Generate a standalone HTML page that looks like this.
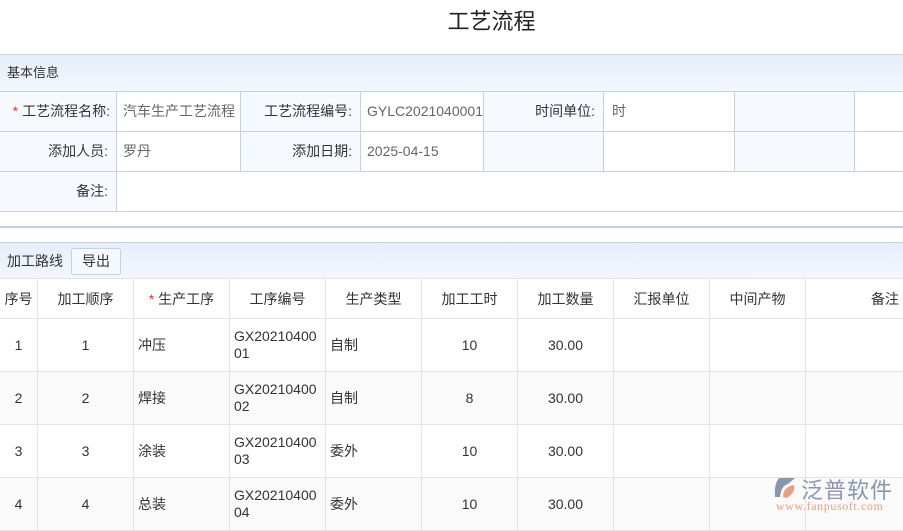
<!DOCTYPE html>
<html><head><meta charset="utf-8"><style>
*{margin:0;padding:0;box-sizing:border-box}
body{width:903px;height:521px;overflow:hidden;background:#fff;font-family:"Liberation Sans","Noto Sans CJK SC",sans-serif;font-size:14px;color:#333;position:relative}
.abs{position:absolute}
.title{left:0;width:983px;top:4px;text-align:center;font-size:22px;color:#222}
.hd{left:0;width:903px;background:linear-gradient(#e6eefa,#f3f7fd);border-top:1px solid #c5d0e0;border-bottom:1px solid #c5d0e0;font-size:13px}
.l{border-right:1px solid #c5d0e0;border-bottom:1px solid #c5d0e0;height:40px;line-height:39px;padding:0 8px;white-space:nowrap;overflow:hidden}
table{border-collapse:collapse;position:absolute;left:-1px;top:278px;table-layout:fixed;width:916px}
td{border:1px solid #e3e3e3;height:53px;text-align:center;padding:0 4px;white-space:nowrap}
tr.h td{height:40px}
tr.g td{background:#fafafa}
.red{color:#e33}
</style></head><body>
<div class="abs title">工艺流程</div>
<div class="abs hd" style="top:54px;height:38px;line-height:36px;padding-left:7px">基本信息</div>
<div class="abs" style="top:92px;left:0">
<div class="abs l" style="left:0;width:117px;text-align:right;background:#f6faff;top:0;padding:0 6px"><span class="red">*</span> 工艺流程名称:</div>
<div class="abs l" style="left:117px;width:124px;color:#666;padding-left:6px">汽车生产工艺流程</div>
<div class="abs l" style="left:241px;width:120px;text-align:right;background:#f6faff">工艺流程编号:</div>
<div class="abs l" style="left:361px;width:123px;color:#666;padding-left:6px">GYLC2021040001</div>
<div class="abs l" style="left:484px;width:120px;text-align:right;background:#f6faff">时间单位:</div>
<div class="abs l" style="left:604px;width:131px;color:#666">时</div>
<div class="abs l" style="left:735px;width:120px;background:#f6faff"></div>
<div class="abs l" style="left:855px;width:60px"></div>
<div class="abs l" style="top:40px;left:0;width:117px;text-align:right;background:#f6faff">添加人员:</div>
<div class="abs l" style="top:40px;left:117px;width:124px;color:#666;padding-left:6px">罗丹</div>
<div class="abs l" style="top:40px;left:241px;width:120px;text-align:right;background:#f6faff">添加日期:</div>
<div class="abs l" style="top:40px;left:361px;width:123px;color:#666;padding-left:6px">2025-04-15</div>
<div class="abs l" style="top:40px;left:484px;width:120px;background:#f6faff"></div>
<div class="abs l" style="top:40px;left:604px;width:131px"></div>
<div class="abs l" style="top:40px;left:735px;width:120px;background:#f6faff"></div>
<div class="abs l" style="top:40px;left:855px;width:60px"></div>
<div class="abs l" style="top:80px;left:0;width:117px;text-align:right;background:#f6faff">备注:</div>
<div class="abs l" style="top:80px;left:117px;width:800px;border-right:0"></div>
</div>
<div class="abs" style="top:226px;left:0;width:903px;height:2px;background:#c5d0e0"></div>
<div class="abs hd" style="top:242px;height:37px;line-height:36px;padding-left:7px;border-bottom:1px solid #e3e3e3;font-size:14px">加工路线<span style="display:inline-block;margin-left:8px;border:1px solid #c5d0e0;background:#f6f9fd;border-radius:3px;height:27px;line-height:25px;padding:0 10px;vertical-align:middle;position:relative;top:-1px">导出</span></div>
<table>
<colgroup><col style="width:38px"><col style="width:96px"><col style="width:96px"><col style="width:96px"><col style="width:96px"><col style="width:96px"><col style="width:96px"><col style="width:96px"><col style="width:96px"><col style="width:110px"></colgroup>
<tr class="h"><td>序号</td><td>加工顺序</td><td><span class="red">*</span> 生产工序</td><td>工序编号</td><td>生产类型</td><td>加工工时</td><td>加工数量</td><td>汇报单位</td><td>中间产物</td><td style="text-align:right;padding-right:16px">备注</td></tr>
<tr><td>1</td><td>1</td><td style="text-align:left">冲压</td><td style="text-align:left;line-height:17px">GX20210400<br>01</td><td style="text-align:left">自制</td><td>10</td><td>30.00</td><td></td><td></td><td></td></tr>
<tr class="g"><td>2</td><td>2</td><td style="text-align:left">焊接</td><td style="text-align:left;line-height:17px">GX20210400<br>02</td><td style="text-align:left">自制</td><td>8</td><td>30.00</td><td></td><td></td><td></td></tr>
<tr><td>3</td><td>3</td><td style="text-align:left">涂装</td><td style="text-align:left;line-height:17px">GX20210400<br>03</td><td style="text-align:left">委外</td><td>10</td><td>30.00</td><td></td><td></td><td></td></tr>
<tr class="g"><td>4</td><td>4</td><td style="text-align:left">总装</td><td style="text-align:left;line-height:17px">GX20210400<br>04</td><td style="text-align:left">委外</td><td>10</td><td>30.00</td><td></td><td></td><td></td></tr>
</table>
<svg class="abs" style="left:773px;top:476px" width="26" height="24" viewBox="0 0 26 24"><path d="M6 2 L22 2 L15 8 Q8 10 7 21 L2 21 Q1 8 6 2Z" fill="#8a96ae"/><path d="M10 21 Q10 11 21 9 Q23 16 14 22Z" fill="#e4a184"/></svg>
<div class="abs" style="left:801px;top:473px;font-size:22px;color:#8a96ae;letter-spacing:1px">泛普软件</div>
<div class="abs" style="left:776px;top:499px;font-size:12px;color:#e4a184;font-family:'Liberation Serif',serif;letter-spacing:0.6px">www.fanpusoft.com</div>
</body></html>
